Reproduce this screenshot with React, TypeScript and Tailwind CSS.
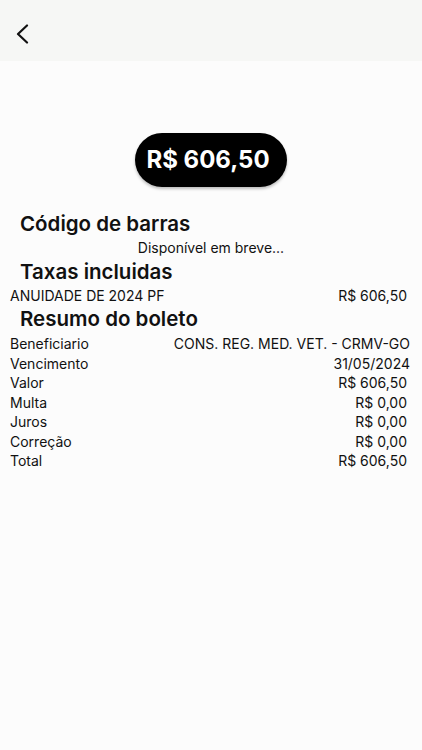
import React from "react";

const rows: [string, string][] = [
  ["Beneficiario", "CONS. REG. MED. VET. - CRMV-GO"],
  ["Vencimento", "31/05/2024"],
  ["Valor", "R$ 606,50"],
  ["Multa", "R$ 0,00"],
  ["Juros", "R$ 0,00"],
  ["Correção", "R$ 0,00"],
  ["Total", "R$ 606,50"],
];

export default function App() {
  return (
    <div
      className="min-h-[750px] w-full bg-[#fcfcfc] text-[#111111]"
      style={{ fontFamily: "Inter, 'Noto Sans', sans-serif" }}
    >
      <div className="h-[61px] bg-[#f6f7f5] flex items-center pl-[15px]">
        <svg width="14" height="20" viewBox="0 0 14 20" fill="none" className="mt-[7px]">
          <path d="M12 1.5 L3 10 L12 18.5" stroke="#111" strokeWidth="2.2" strokeLinecap="round" strokeLinejoin="round" />
        </svg>
      </div>

      <div className="flex justify-center mt-[72px]">
        <div className="h-[54px] w-[152px] rounded-full bg-black flex items-center justify-center pr-[6px] shadow-[0_2px_3px_rgba(0,0,0,0.25)]">
          <span className="text-white text-[24px] font-bold">R$ 606,50</span>
        </div>
      </div>

      <div className="mt-[25px] ml-[20px] text-[20.5px] leading-[24px] font-semibold">Código de barras</div>
      <div className="mt-[2px] text-center text-[14px] leading-[20px]">Disponível em breve...</div>
      <div className="mt-[2px] ml-[20px] text-[20.5px] leading-[24px] font-semibold">Taxas incluidas</div>
      <div className="mt-[2px] flex justify-between pl-[10px] pr-[12px] text-[14px] leading-[20px]">
        <span>ANUIDADE DE 2024 PF</span>
        <span className="mr-[3px]">R$ 606,50</span>
      </div>
      <div className="mt-[1px] ml-[20px] text-[20.5px] leading-[24px] font-semibold">Resumo do boleto</div>
      <div className="mt-[3px] flex flex-col pl-[10px] pr-[12px] text-[14px]">
        {rows.map(([k, v]) => (
          <div key={k} className="flex justify-between leading-[19.5px]">
            <span>{k}</span>
            <span className={v.startsWith("R$") ? "mr-[3px]" : ""}>{v}</span>
          </div>
        ))}
      </div>
    </div>
  );
}
